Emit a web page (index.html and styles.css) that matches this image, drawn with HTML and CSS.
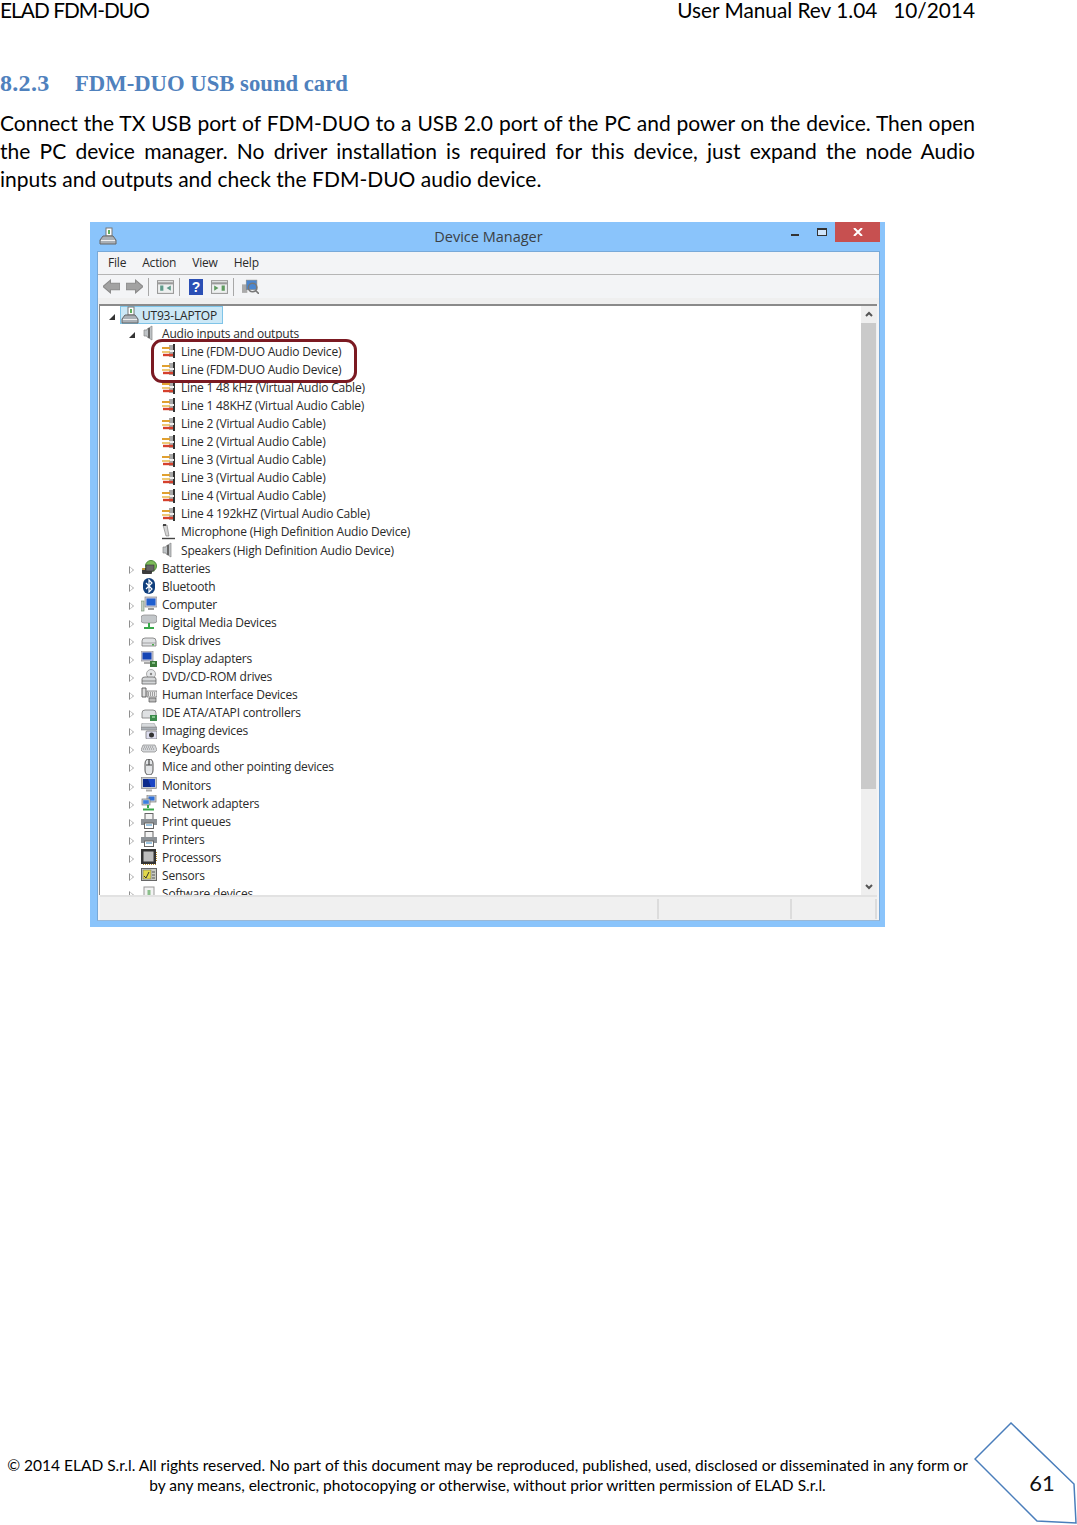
FILE: index.html
```html
<!DOCTYPE html>
<html>
  <head>
    <meta charset="utf-8">
    <title>ELAD FDM-DUO User Manual</title>
    <link rel="stylesheet" href="styles.css">
  </head>

  <body>
    <svg class="icon-defs" width="0" height="0">
      <defs>
        <symbol id="i-pc" viewBox="0 0 18 18">
          <rect x="7" y="1" width="6" height="8" fill="#fff" stroke="#777"/>
          <rect x="9" y="3" width="2" height="4" fill="#5fae5f"/>
          <path d="M4 9h10l3 4v4H1v-4z" fill="#aab0b6" stroke="#666"/>
          <path d="M2 13.500h14" stroke="#eee"/>
        </symbol>
        <symbol id="i-speaker" viewBox="0 0 16 16">
          <path d="M3 5h3V4l5-3v14l-5-3v-1H3z" fill="#bfc3c6" stroke="#888" stroke-width=".7"/>
          <path d="M8 3v10" stroke="#666" stroke-width="2"/>
        </symbol>
        <symbol id="i-line" viewBox="0 0 16 16">
          <rect x="9" y="2" width="6" height="12" fill="#aaa"/>
          <path d="M14 1v14" stroke="#333" stroke-width="2"/>
          <path d="M2 5h8" stroke="#e0a030" stroke-width="2"/>
          <path d="M9 8h5" stroke="#eee" stroke-width="2"/>
          <path d="M2 9h8" stroke="#e8b84a" stroke-width="1.5"/>
          <path d="M3 12h10" stroke="#d5402c" stroke-width="2.4"/>
        </symbol>
        <symbol id="i-mic" viewBox="0 0 16 16">
          <path d="M3 1h4l2 11H6z" fill="#d5d5d5" stroke="#777" stroke-width=".6"/>
          <path d="M3 1h3" stroke="#222" stroke-width="1.6"/>
          <path d="M2 14.5h13" stroke="#444" stroke-width="1.4"/>
        </symbol>
        <symbol id="i-battery" viewBox="0 0 16 16">
          <circle cx="10" cy="6" r="5.5" fill="#7dbb5a" stroke="#4b8a3a"/>
          <rect x="1" y="8" width="10" height="6" rx="1" fill="#3d3d3d"/>
          <rect x="5" y="5" width="8" height="6" fill="#666" stroke="#333" stroke-width=".6"/>
          <path d="M1 9h3" stroke="#e2b23c" stroke-width="1.6"/>
        </symbol>
        <symbol id="i-bluetooth" viewBox="0 0 16 16">
          <rect x="2" y="0" width="12" height="16" rx="6" fill="#103f7d"/>
          <path d="M5 5l6 6-3 3V2l3 3-6 6" fill="none" stroke="#fff" stroke-width="1.2"/>
        </symbol>
        <symbol id="i-computer" viewBox="0 0 16 16">
          <rect x="4" y="1" width="12" height="10" fill="#ccd" stroke="#888" stroke-width=".7"/>
          <rect x="5.500" y="2.500" width="9" height="7" fill="#1f5fd0"/>
          <path d="M7 12h6v2H7z" fill="#999"/>
          <rect x="0" y="5" width="3" height="10" fill="#c5cfc5" stroke="#6a8a6a" stroke-width=".6"/>
        </symbol>
        <symbol id="i-media" viewBox="0 0 16 16">
          <rect x="0" y="1" width="16" height="8" rx="3" fill="#c3c7ca" stroke="#888" stroke-width=".7"/>
          <path d="M8 9v4M3 14h10" stroke="#39a84a" stroke-width="2"/>
        </symbol>
        <symbol id="i-disk" viewBox="0 0 16 16">
          <path d="M1 9q0-3 3-3h8q3 0 3 3v5H1z" fill="#dfe1e3" stroke="#777" stroke-width=".8"/>
          <path d="M1 11h14" stroke="#888" stroke-width=".7"/>
          <rect x="11" y="12" width="2" height="1.500" fill="#4ba84b"/>
        </symbol>
        <symbol id="i-display" viewBox="0 0 16 16">
          <rect x="0" y="0" width="12" height="10" fill="#ccd" stroke="#888" stroke-width=".7"/>
          <rect x="1.500" y="1.500" width="9" height="7" fill="#1545b5"/>
          <path d="M3 11h6v2H3z" fill="#aaa"/>
          <rect x="9" y="10" width="7" height="6" fill="#3b7a3b"/>
          <path d="M11 12h3" stroke="#cfc" stroke-width="1"/>
        </symbol>
        <symbol id="i-dvd" viewBox="0 0 16 16">
          <circle cx="10" cy="5" r="4.500" fill="#e5e7e9" stroke="#888" stroke-width=".7"/>
          <circle cx="10" cy="5" r="1.200" fill="#888"/>
          <path d="M1 10q0-2 3-2h8q3 0 3 2v5H1z" fill="#d5d7d9" stroke="#666" stroke-width=".8"/>
          <path d="M1 12h14" stroke="#666" stroke-width=".7"/>
        </symbol>
        <symbol id="i-hid" viewBox="0 0 16 16">
          <path d="M1 1h4v9H1z" fill="#ddd" stroke="#555" stroke-width=".9"/>
          <rect x="6" y="4" width="10" height="6" fill="#e9e9e9" stroke="#666" stroke-width=".7"/>
          <path d="M7 6h8M7 8h8" stroke="#555" stroke-dasharray="1 1"/>
          <path d="M8 11h7v4H8z" fill="#bbb" stroke="#555" stroke-width=".7"/>
        </symbol>
        <symbol id="i-ide" viewBox="0 0 16 16">
          <path d="M1 8q0-3 3-3h8q3 0 3 3v5H1z" fill="#dfe1e3" stroke="#777" stroke-width=".8"/>
          <rect x="9" y="10" width="7" height="6" fill="#3b8a4b"/>
          <path d="M11 12h3" stroke="#cfc"/>
        </symbol>
        <symbol id="i-imaging" viewBox="0 0 16 16">
          <path d="M0 4h16v3H0z" fill="#aab0b6" stroke="#777" stroke-width=".5"/>
          <path d="M1 0h12l2 4H0z" fill="#d7dadd" stroke="#888" stroke-width=".5"/>
          <rect x="5" y="8" width="11" height="8" rx="1" fill="#dde" stroke="#666" stroke-width=".7"/>
          <circle cx="10.500" cy="12" r="2.500" fill="#333"/>
        </symbol>
        <symbol id="i-keyboard" viewBox="0 0 16 16">
          <path d="M2 4h12l2 5-2 2H2L0 9z" fill="#d5d7da" stroke="#888" stroke-width=".7"/>
          <path d="M3 6h10M2 8h12" stroke="#888" stroke-dasharray="1 1"/>
        </symbol>
        <symbol id="i-mouse" viewBox="0 0 16 16">
          <path d="M4 5q0-5 4-5t4 5v6q0 5-4 5t-4-5z" fill="#e3e5e7" stroke="#555"/>
          <path d="M8 0v6M5 6h6" stroke="#444" stroke-width="1.200"/>
        </symbol>
        <symbol id="i-monitor" viewBox="0 0 16 16">
          <rect x="0.500" y="0.500" width="15" height="11" fill="#c5c9cd" stroke="#888" stroke-width=".7"/>
          <rect x="2" y="2" width="12" height="8" fill="#1b45c5"/>
          <path d="M2 2h5l3 8H2z" fill="#0c2a8a"/>
          <path d="M5 12.500h6v2H5z" fill="#aaa"/>
        </symbol>
        <symbol id="i-network" viewBox="0 0 16 16">
          <rect x="6" y="0" width="9" height="7" fill="#cfd3d6" stroke="#777" stroke-width=".7"/>
          <rect x="7.500" y="1.500" width="6" height="4" fill="#2f6fd8"/>
          <rect x="1" y="4" width="8" height="6" fill="#cfd3d6" stroke="#777" stroke-width=".7"/>
          <rect x="2.200" y="5.200" width="5.600" height="3.600" fill="#3b7fe0"/>
          <path d="M7 10v3M2 14.500h11" stroke="#39a84a" stroke-width="2"/>
        </symbol>
        <symbol id="i-printer" viewBox="0 0 16 16">
          <rect x="4" y="0.500" width="8" height="6" fill="#f3f3f3" stroke="#666"/>
          <path d="M0 6h16v6H0z" fill="#8d9297"/>
          <rect x="3.500" y="10" width="9" height="5.500" fill="#fff" stroke="#666"/>
          <path d="M5 12h6" stroke="#3a8ac0"/>
        </symbol>
        <symbol id="i-cpu" viewBox="0 0 16 16">
          <rect x="0" y="0" width="15" height="15" fill="#333"/>
          <rect x="2.500" y="2.500" width="10" height="10" fill="#bdbdbd"/>
          <path d="M15.500 3v10M2 15.500h13" stroke="#b58a2a" stroke-dasharray="1 1"/>
        </symbol>
        <symbol id="i-sensor" viewBox="0 0 16 16">
          <rect x="0.500" y="1.500" width="15" height="12" fill="#c9ccc4" stroke="#666"/>
          <rect x="2" y="3" width="8" height="9" fill="#e3d94a" stroke="#666" stroke-width=".5"/>
          <path d="M3 9l2 2 3-6" fill="none" stroke="#333"/>
          <path d="M11 5h3M11 8h3M11 11h3" stroke="#555"/>
        </symbol>
        <symbol id="i-software" viewBox="0 0 16 16">
          <rect x="3" y="1" width="10" height="14" fill="#f3f3f3" stroke="#999"/>
          <rect x="6.500" y="4" width="3" height="6" fill="#8cc08c"/>
        </symbol>
      </defs>
    </svg>

    <div class="page">
      <header class="top">
        <span class="doc-name">ELAD FDM-DUO</span>
        <span class="doc-rev">User Manual Rev 1.04 &nbsp; 10/2014</span>
      </header>

      <h2 class="section"><span class="num">8.2.3</span>FDM-DUO USB sound card</h2>
      <p class="intro">Connect the TX USB port of FDM-DUO to a USB 2.0 port of the PC and power on the device. Then open the PC device manager. No driver installation is required for this device, just expand the node Audio inputs&nbsp;and outputs and check the FDM-DUO audio device.</p>

      <div class="window">
        <div class="titlebar">
          <svg class="title-icon"><use href="#i-pc"/></svg>
          <span class="title-text">Device Manager</span>
          <div class="win-btns">
            <span class="btn-min"></span>
            <span class="btn-max"></span>
            <span class="btn-close">
              <svg width="10" height="8" viewBox="0 0 10 8"><path d="M1 0l8 8M9 0L1 8" stroke="#fff" stroke-width="2"/></svg>
            </span>
          </div>
        </div>

        <div class="inner">
          <nav class="menubar">
            <span>File</span>
            <span>Action</span>
            <span>View</span>
            <span>Help</span>
          </nav>

          <div class="toolbar">
            <svg class="tool" viewBox="0 0 16 14"><path d="M0 7l7-6v3h9v6H7v3z" fill="#a2a2a2" stroke="#8a8a8a"/></svg>
            <svg class="tool tool-next" viewBox="0 0 16 14"><path d="M16 7L9 1v3H0v6h9v3z" fill="#a2a2a2" stroke="#8a8a8a"/></svg>
            <span class="sep"></span>
            <svg class="tool" viewBox="0 0 16 14"><rect x=".5" y="1.500" width="15" height="12" fill="#eef0f0" stroke="#999"/><path d="M1 4h14" stroke="#999" stroke-width="2"/><path d="M3 6h3v5H3zM13 6v5L9 8.500z" fill="#5f9a8a"/></svg>
            <span class="sep"></span>
            <svg class="tool tool-help" viewBox="0 0 14 16"><rect width="14" height="16" fill="#2b4fb5"/><text x="7" y="13" class="help-mark">?</text></svg>
            <svg class="tool tool-view" viewBox="0 0 16 14"><rect x=".5" y="1.500" width="15" height="12" fill="#eef0f0" stroke="#999"/><path d="M1 4h14" stroke="#999" stroke-width="2"/><path d="M10 6h3v5h-3zM3 6v5l4-2.500z" fill="#5f9a5f"/></svg>
            <span class="sep"></span>
            <svg class="tool" viewBox="0 0 16 14"><rect x="0" y="5" width="5" height="8" fill="#aaa"/><rect x="4" y="1" width="10" height="9" fill="#4a86d0" stroke="#888" stroke-width=".6"/><circle cx="10" cy="8" r="4" fill="none" stroke="#777" stroke-width="1.500"/><path d="M13 11l3 3" stroke="#777" stroke-width="1.500"/></svg>
          </div>
          <div class="toolbar-gap"></div>

          <div class="content">
            <div class="tree">
              <div class="row lv0"><span class="arrow open"></span><span class="selected"><svg class="ico ico-pc"><use href="#i-pc"/></svg><span class="label">UT93-LAPTOP</span></span></div>
              <div class="row lv1"><span class="arrow open"></span><svg class="ico"><use href="#i-speaker"/></svg><span class="label">Audio inputs and outputs</span></div>
              <div class="row lv2"><svg class="ico"><use href="#i-line"/></svg><span class="label">Line (FDM-DUO Audio Device)</span></div>
              <div class="row lv2"><svg class="ico"><use href="#i-line"/></svg><span class="label">Line (FDM-DUO Audio Device)</span></div>
              <div class="row lv2"><svg class="ico"><use href="#i-line"/></svg><span class="label">Line 1 48 kHz (Virtual Audio Cable)</span></div>
              <div class="row lv2"><svg class="ico"><use href="#i-line"/></svg><span class="label">Line 1 48KHZ (Virtual Audio Cable)</span></div>
              <div class="row lv2"><svg class="ico"><use href="#i-line"/></svg><span class="label">Line 2 (Virtual Audio Cable)</span></div>
              <div class="row lv2"><svg class="ico"><use href="#i-line"/></svg><span class="label">Line 2 (Virtual Audio Cable)</span></div>
              <div class="row lv2"><svg class="ico"><use href="#i-line"/></svg><span class="label">Line 3 (Virtual Audio Cable)</span></div>
              <div class="row lv2"><svg class="ico"><use href="#i-line"/></svg><span class="label">Line 3 (Virtual Audio Cable)</span></div>
              <div class="row lv2"><svg class="ico"><use href="#i-line"/></svg><span class="label">Line 4 (Virtual Audio Cable)</span></div>
              <div class="row lv2"><svg class="ico"><use href="#i-line"/></svg><span class="label">Line 4 192kHZ (Virtual Audio Cable)</span></div>
              <div class="row lv2"><svg class="ico"><use href="#i-mic"/></svg><span class="label">Microphone (High Definition Audio Device)</span></div>
              <div class="row lv2"><svg class="ico"><use href="#i-speaker"/></svg><span class="label">Speakers (High Definition Audio Device)</span></div>
              <div class="row lv1"><span class="arrow"></span><svg class="ico"><use href="#i-battery"/></svg><span class="label">Batteries</span></div>
              <div class="row lv1"><span class="arrow"></span><svg class="ico"><use href="#i-bluetooth"/></svg><span class="label">Bluetooth</span></div>
              <div class="row lv1"><span class="arrow"></span><svg class="ico"><use href="#i-computer"/></svg><span class="label">Computer</span></div>
              <div class="row lv1"><span class="arrow"></span><svg class="ico"><use href="#i-media"/></svg><span class="label">Digital Media Devices</span></div>
              <div class="row lv1"><span class="arrow"></span><svg class="ico"><use href="#i-disk"/></svg><span class="label">Disk drives</span></div>
              <div class="row lv1"><span class="arrow"></span><svg class="ico"><use href="#i-display"/></svg><span class="label">Display adapters</span></div>
              <div class="row lv1"><span class="arrow"></span><svg class="ico"><use href="#i-dvd"/></svg><span class="label">DVD/CD-ROM drives</span></div>
              <div class="row lv1"><span class="arrow"></span><svg class="ico"><use href="#i-hid"/></svg><span class="label">Human Interface Devices</span></div>
              <div class="row lv1"><span class="arrow"></span><svg class="ico"><use href="#i-ide"/></svg><span class="label">IDE ATA/ATAPI controllers</span></div>
              <div class="row lv1"><span class="arrow"></span><svg class="ico"><use href="#i-imaging"/></svg><span class="label">Imaging devices</span></div>
              <div class="row lv1"><span class="arrow"></span><svg class="ico"><use href="#i-keyboard"/></svg><span class="label">Keyboards</span></div>
              <div class="row lv1"><span class="arrow"></span><svg class="ico"><use href="#i-mouse"/></svg><span class="label">Mice and other pointing devices</span></div>
              <div class="row lv1"><span class="arrow"></span><svg class="ico"><use href="#i-monitor"/></svg><span class="label">Monitors</span></div>
              <div class="row lv1"><span class="arrow"></span><svg class="ico"><use href="#i-network"/></svg><span class="label">Network adapters</span></div>
              <div class="row lv1"><span class="arrow"></span><svg class="ico"><use href="#i-printer"/></svg><span class="label">Print queues</span></div>
              <div class="row lv1"><span class="arrow"></span><svg class="ico"><use href="#i-printer"/></svg><span class="label">Printers</span></div>
              <div class="row lv1"><span class="arrow"></span><svg class="ico"><use href="#i-cpu"/></svg><span class="label">Processors</span></div>
              <div class="row lv1"><span class="arrow"></span><svg class="ico"><use href="#i-sensor"/></svg><span class="label">Sensors</span></div>
              <div class="row lv1"><span class="arrow"></span><svg class="ico"><use href="#i-software"/></svg><span class="label">Software devices</span></div>
              <div class="highlight"></div>
            </div>
            <div class="scrollbar">
              <svg class="chev" viewBox="0 0 8 6"><path d="M1 5l3-3 3 3" fill="none" stroke="#555" stroke-width="2"/></svg>
              <div class="track"><div class="thumb"></div></div>
              <svg class="chev" viewBox="0 0 8 6"><path d="M1 1l3 3 3-3" fill="none" stroke="#555" stroke-width="2"/></svg>
            </div>
          </div>

          <div class="statusbar">
            <span class="cell cell-main"></span>
            <span class="cell cell-mid"></span>
            <span class="cell cell-end"></span>
          </div>
        </div>
      </div>

      <footer class="bottom">
        <p>© 2014 ELAD S.r.l. All rights reserved. No part of this document may be reproduced, published, used, disclosed or disseminated in any form or<br>by any means, electronic, photocopying or otherwise, without prior written permission of ELAD S.r.l.</p>
      </footer>

      <svg class="page-tag" width="104" height="104" viewBox="0 0 104 104">
        <path d="M37 1L1 37l62 62 39 2-2-39z" fill="#fff" stroke="#4a7ebb" stroke-width="1.500"/>
        <text x="68" y="69" class="page-num">61</text>
      </svg>
    </div>
  </body>
</html>
```

FILE: styles.css
```css
* {
  box-sizing: border-box;
}

body {
  margin: 0;
  background: white;
  color: #000;
  font-family: Lato, "Open Sans", sans-serif;
}

.icon-defs {
  display: block;
  height: 0;
}

.page {
  position: relative;
  width: 1077px;
  height: 1525px;
  display: flex;
  flex-direction: column;
  overflow: hidden;
}

.top {
  width: 975px;
  height: 20px;
  display: flex;
  justify-content: space-between;
  align-items: center;
  font-size: 20.8px;
  line-height: 20px;
}

.doc-name {
  letter-spacing: -0.95px;
}

.section {
  height: 27px;
  margin: 50px 0 0 0;
  font-family: "Liberation Serif", serif;
  font-weight: bold;
  font-size: 22.7px;
  line-height: 26px;
  color: #4f81bd;
}

.num {
  display: inline-block;
  width: 75px;
  font-size: 24px;
  letter-spacing: 0.3px;
}

.intro {
  width: 975px;
  margin: 12px 0 0 0;
  font-size: 21px;
  line-height: 28px;
  text-align: justify;
}

/* device manager window */
.window {
  width: 795px;
  height: 705px;
  margin: 29px 0 0 90px;
  padding: 0 5px 6px 7px;
  background: #8ac4fb;
  display: flex;
  flex-direction: column;
  font-family: "Open Sans", sans-serif;
  color: #2a2a2a;
}

.titlebar {
  position: relative;
  height: 29px;
  flex: none;
  display: flex;
  align-items: center;
  justify-content: center;
}

.title-icon {
  position: absolute;
  left: 2px;
  top: 5px;
  width: 18px;
  height: 18px;
}

.title-text {
  font-size: 14.5px;
  color: #3a3f45;
}

.win-btns {
  position: absolute;
  right: 0;
  top: 0;
  display: flex;
  align-items: flex-start;
}

.btn-min {
  width: 8px;
  height: 2px;
  margin: 12px 18px 0 0;
  background: #333;
}

.btn-max {
  width: 10px;
  height: 8px;
  margin: 6px 8px 0 0;
  border: 1px solid #333;
  border-top-width: 2px;
  background: #cfe5fb;
}

.btn-close {
  width: 45px;
  height: 20px;
  background: #c75050;
  display: flex;
  align-items: center;
  justify-content: center;
}

.inner {
  flex: 1;
  min-height: 0;
  display: flex;
  flex-direction: column;
  background: #f3f4f6;
  border: 1px solid #78a9d8;
  border-bottom: 1px solid #9ab8d6;
}

.menubar {
  height: 23px;
  flex: none;
  display: flex;
  align-items: center;
  gap: 16px;
  padding: 0 0 1px 10px;
  border-bottom: 1px solid #b5b5b5;
  font-size: 12px;
  letter-spacing: -0.2px;
}

.toolbar {
  height: 23px;
  flex: none;
  display: flex;
  align-items: center;
  padding-left: 5px;
}

.tool {
  width: 17px;
  height: 15px;
  flex: none;
}

.tool-next {
  margin-left: 6px;
}

.tool-help {
  width: 14px;
  height: 16px;
  margin-left: 1px;
}

.tool-view {
  margin-left: 8px;
}

.help-mark {
  font-family: "Liberation Sans", sans-serif;
  font-size: 14px;
  font-weight: bold;
  fill: white;
  text-anchor: middle;
}

.sep {
  width: 1px;
  height: 18px;
  margin: 0 8px 0 5px;
  background: #a8a8a8;
}

.toolbar-gap {
  height: 6px;
  flex: none;
  background: #efefef;
}

.content {
  flex: 1;
  min-height: 0;
  display: flex;
  margin: 0 2px 0 1px;
  background: white;
  border-top: 2px solid #8a8a8a;
  border-left: 1px solid #8a8a8a;
}

.tree {
  position: relative;
  flex: 1;
  overflow: hidden;
}

.row {
  height: 18.09px;
  display: flex;
  align-items: center;
  font-size: 12px;
  letter-spacing: -0.2px;
  white-space: nowrap;
}

.lv0 {
  padding-left: 9px;
}

.lv1 {
  padding-left: 29px;
}

.lv2 {
  padding-left: 60px;
}

.arrow {
  position: relative;
  width: 0;
  height: 0;
  flex: none;
  margin: 3px 7px 0 0;
  border-style: solid;
  border-width: 4.5px 0 4.5px 5px;
  border-color: transparent transparent transparent #8f8f8f;
}

/* hollow middle of the collapsed arrow */
.arrow::after {
  content: "";
  position: absolute;
  left: -4px;
  top: -3px;
  border-style: solid;
  border-width: 3px 0 3px 3px;
  border-color: transparent transparent transparent white;
}

.arrow.open {
  border-width: 0 0 6px 6px;
  border-color: transparent transparent #333 transparent;
  margin-right: 6px;
}

.arrow.open::after {
  display: none;
}

.lv0 .arrow.open {
  margin-right: 5px;
}

.ico {
  width: 16px;
  height: 16px;
  flex: none;
  margin-right: 3px;
}

.ico-pc {
  width: 18px;
  height: 18px;
  margin: 0 1px 0 0;
}

.label {
  padding: 0 2px;
}

.selected {
  width: 103px;
  height: 18px;
  display: flex;
  align-items: center;
  background: #cce8f6;
  border: 1px solid #7fc4e8;
}

.highlight {
  position: absolute;
  left: 51px;
  top: 33px;
  width: 206px;
  height: 44px;
  border: 3.5px solid #7b1a22;
  border-radius: 11px;
}

.scrollbar {
  width: 16px;
  flex: none;
  background: #efefef;
  display: flex;
  flex-direction: column;
  align-items: center;
}

.chev {
  width: 8px;
  height: 6px;
  margin: 5px 0;
  flex: none;
}

.track {
  flex: 1;
  width: 100%;
}

.thumb {
  width: 15px;
  height: 466px;
  background: #cacaca;
  margin-top: 1px;
}

.statusbar {
  height: 25px;
  flex: none;
  display: flex;
  margin: 0 2px;
  padding-top: 2px;
  background: #f0f0f0;
  border-top: 2px solid #e2e2e2;
}

.cell {
  border-right: 2px solid #dcdcdc;
  margin-bottom: 1px;
}

.cell-main {
  width: 559px;
}

.cell-mid {
  width: 133px;
}

.cell-end {
  flex: 1;
}

/* footer */
.bottom {
  width: 975px;
  margin-top: auto;
  margin-bottom: 30px;
  text-align: center;
  font-size: 15.52px;
  line-height: 20px;
}

.bottom p {
  margin: 0;
}

.page-tag {
  position: absolute;
  left: 974px;
  top: 1422px;
}

.page-num {
  font-family: Lato, sans-serif;
  font-size: 22px;
  fill: #111;
  text-anchor: middle;
}
```
